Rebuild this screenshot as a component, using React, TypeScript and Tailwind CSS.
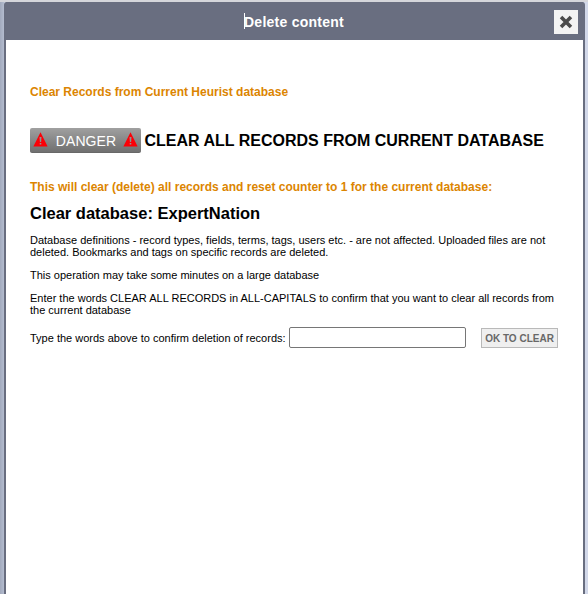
import React from "react";

function Warning() {
  return (
    <svg width="15" height="15" viewBox="0 0 15 15" className="block shrink-0">
      <path d="M7.5 0.2 L14.6 14.4 H0.4 Z" fill="#fb0007" />
      <path d="M6.5 5 H8.5 L8.1 10 H6.9 Z M6.7 11 H8.3 V12.6 H6.7 Z" fill="#8f8f8f" />
    </svg>
  );
}

function Header() {
  return (
    <header className="flex h-[38px] shrink-0 items-center bg-[#696e80] pr-[5px]">
      <div className="ml-[238px] flex h-4 items-center border-l border-white">
        <h1 className="mt-0.5 -ml-px whitespace-nowrap text-[14px] leading-4 font-bold tracking-[0.25px] text-white">Delete content</h1>
      </div>
      <button aria-label="Close" className="mt-px ml-auto flex h-6 w-6 items-center justify-center bg-[#f3f3f3]">
        <svg width="14" height="14" viewBox="0 0 14 14">
          <path d="M3.3 3.3 L10.7 10.7 M10.7 3.3 L3.3 10.7" stroke="#4b4b4b" strokeWidth="3.6" strokeLinecap="square" />
        </svg>
      </button>
    </header>
  );
}

export default function App() {
  return (
    <div className="flex h-[594px] w-[588px] overflow-hidden bg-[linear-gradient(90deg,#a2aabd_0,#b4bccf_4px,#d2d8e9_5px)] font-['Liberation_Sans',Arial,sans-serif] text-black">
      <div className="flex w-full flex-col border-t-2 border-[#d5d6db] pr-[3px] pl-1">
        <div className="flex flex-1 flex-col rounded-t-[3px] border-x-2 border-[#696e80] bg-[#696e80]">
          <Header />
          <main className="flex-1 bg-white px-6 pt-11 text-[11px] leading-3">
            <h2 className="h-4 whitespace-nowrap text-[12px] leading-4 font-bold text-[#dc8501]">Clear Records from Current Heurist database</h2>
            <div className="mt-7 flex h-[25px] items-center">
              <div className="flex h-[25px] w-[111px] shrink-0 items-center justify-between rounded-[2px] border-b border-[#686868] bg-linear-to-b from-[#a0a0a0] to-[#707070] px-[3px] pb-0.5">
                <Warning />
                <span className="mt-[3px] ml-px text-[14px] leading-4 tracking-[0.1px] text-white">DANGER</span>
                <Warning />
              </div>
              <span className="ml-[3.5px] whitespace-nowrap text-[16px] leading-5 font-bold">CLEAR ALL RECORDS FROM CURRENT DATABASE</span>
            </div>
            <h3 className="mt-[26px] h-4 whitespace-nowrap text-[12px] leading-4 font-bold text-[#dc8501]">This will clear (delete) all records and reset counter to 1 for the current database:</h3>
            <h2 className="mt-2 h-5 text-[16.5px] leading-5 font-bold">Clear database: ExpertNation</h2>
            <p className="mt-[11px] whitespace-nowrap">Database definitions - record types, fields, terms, tags, users etc. - are not affected. Uploaded files are not<br />deleted. Bookmarks and tags on specific records are deleted.</p>
            <p className="mt-[11px]">This operation may take some minutes on a large database</p>
            <p className="mt-[11px] whitespace-nowrap">Enter the words CLEAR ALL RECORDS in ALL-CAPITALS to confirm that you want to clear all records from<br />the current database</p>
            <div className="mt-[11px] flex h-[21px] items-center">
              <label htmlFor="confirm" className="w-[259px] shrink-0 whitespace-nowrap">Type the words above to confirm deletion of records:</label>
              <input id="confirm" className="h-[21px] w-[177px] shrink-0 rounded-[2px] border border-[#767676] bg-white px-1 outline-none" />
              <button className="mt-px ml-[15px] h-5 w-[77px] shrink-0 border border-[#b9b9b9] bg-[#efefef] pt-0.5 text-[10px] leading-3 font-bold whitespace-nowrap text-[#686868]">OK TO CLEAR</button>
            </div>
          </main>
        </div>
      </div>
    </div>
  );
}
